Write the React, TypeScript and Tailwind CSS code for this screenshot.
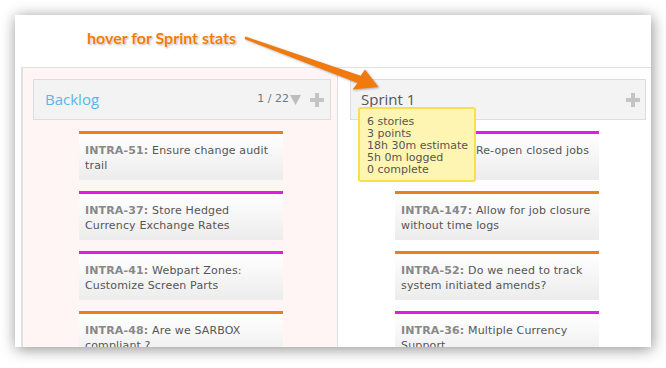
import React from "react";

type Card = { id: string; text: string; color: "orange" | "magenta" };

const backlog: Card[] = [
  { id: "INTRA-51", text: "Ensure change audit trail", color: "orange" },
  { id: "INTRA-37", text: "Store Hedged Currency Exchange Rates", color: "magenta" },
  { id: "INTRA-41", text: "Webpart Zones: Customize Screen Parts", color: "magenta" },
  { id: "INTRA-48", text: "Are we SARBOX compliant ?", color: "orange" },
];

const sprint: Card[] = [
  { id: "INTRA-146", text: "Re-open closed jobs", color: "magenta" },
  { id: "INTRA-147", text: "Allow for job closure without time logs", color: "orange" },
  { id: "INTRA-52", text: "Do we need to track system initiated amends?", color: "orange" },
  { id: "INTRA-36", text: "Multiple Currency Support", color: "magenta" },
];

function Plus() {
  return (
    <svg width="14" height="14" viewBox="0 0 14 14" className="shrink-0">
      <rect x="5" y="0" width="4" height="14" fill="#c4c4c4" />
      <rect x="0" y="5" width="14" height="4" fill="#c4c4c4" />
    </svg>
  );
}

function StoryCard({ card }: { card: Card }) {
  return (
    <div
      className={
        card.color === "orange"
          ? "w-[204px] h-[49px] shrink-0 border-t-[3px] border-[#e8801e] bg-linear-to-b from-white to-[#ececec] pl-[6px] pr-[4px] pt-[9px] text-[11px] leading-[15px] tracking-[0.15px] text-[#555] font-['DejaVu_Sans',sans-serif]"
          : "w-[204px] h-[49px] shrink-0 border-t-[3px] border-[#e01ee0] bg-linear-to-b from-white to-[#ececec] pl-[6px] pr-[4px] pt-[9px] text-[11px] leading-[15px] tracking-[0.15px] text-[#555] font-['DejaVu_Sans',sans-serif]"
      }
    >
      <span className="font-bold text-[#888]">{card.id}:</span> {card.text}
    </div>
  );
}

export default function App() {
  return (
    <div className="relative w-[666px] h-[368px] bg-white pt-[15px] pl-[15px] overflow-hidden">
      <div className="w-[636px] h-[332px] bg-white shadow-[1px_2px_14px_rgba(0,0,0,0.45)] overflow-hidden flex flex-col">
        <div className="h-[52px] shrink-0" />
        <div className="flex flex-1 ml-[6px] border-t border-[#e2e2e2] min-h-0">
          {/* backlog */}
          <div className="w-[317px] shrink-0 bg-[#fff5f5] border-l-2 border-r border-[#e0e0e0] pl-[10px] pr-[6px] pt-[11px] flex flex-col">
            <div className="h-[41px] shrink-0 bg-[#f3f3f3] border border-[#dddddd] flex items-center pl-[11px] pr-[6px]">
              <span className="text-[15px] text-[#5cb6e2] font-['Open_Sans',sans-serif]">Backlog</span>
              <span className="ml-auto text-[11px] text-[#777] font-['DejaVu_Sans',sans-serif]">1 / 22</span>
              <svg width="11" height="10" viewBox="0 0 11 10" className="ml-[1px] mr-[9px]">
                <polygon points="0,0 11,0 5.5,10" fill="#bdbdbd" />
              </svg>
              <Plus />
            </div>
            <div className="flex flex-col gap-[11px] mt-[11px] ml-[46px]">
              {backlog.map((c) => (
                <StoryCard key={c.id} card={c} />
              ))}
            </div>
          </div>
          {/* sprint */}
          <div className="flex-1 bg-white pl-[12px] pr-[5px] pt-[11px] flex flex-col">
            <div className="relative h-[41px] shrink-0 bg-[#f3f3f3] border border-[#dddddd] flex items-center pl-[10px] pr-[5px]">
              <span className="text-[15px] text-[#555] font-['Open_Sans',sans-serif]">Sprint 1</span>
              <div className="ml-auto">
                <Plus />
              </div>
              <div className="absolute z-10 left-[7px] top-[27px] w-[118px] h-[75px] bg-[#fff5b2] border-2 border-[#f6e04e] rounded-[3px] pl-[7px] pt-[7px] text-[11px] leading-[12px] text-[#555] font-['DejaVu_Sans',sans-serif]">
                <div>6 stories</div>
                <div>3 points</div>
                <div>18h 30m estimate</div>
                <div>5h 0m logged</div>
                <div>0 complete</div>
              </div>
            </div>
            <div className="flex flex-col gap-[11px] mt-[11px] ml-[45px]">
              {sprint.map((c) => (
                <StoryCard key={c.id} card={c} />
              ))}
            </div>
          </div>
        </div>
      </div>

      {/* annotation */}
      <div className="absolute left-[87px] top-[28px] text-[16px] leading-[19px] font-bold text-[#f27c00] font-['Lato',sans-serif] [text-shadow:0_0_1px_#fff,0_0_2px_#fff,1px_1px_2px_rgba(0,0,0,0.35)]">
        hover for Sprint stats
      </div>
      <svg
        width="666"
        height="368"
        viewBox="0 0 666 368"
        className="absolute left-0 top-0 pointer-events-none drop-shadow-[1px_1px_1px_rgba(0,0,0,0.3)]"
      >
        <polygon
          points="245.3,36.6 360.6,75.8 365,69.5 378.5,87 352.5,89.5 357.6,83 244.6,39"
          fill="#f07a0e"
        />
      </svg>
    </div>
  );
}
